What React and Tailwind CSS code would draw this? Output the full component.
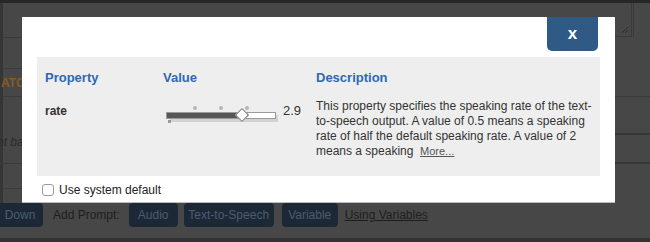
import React from 'react';

const font = { fontFamily: '"Liberation Sans", Arial, sans-serif' };

const Slider = () => (
  <div className="relative w-[112px] h-[20px]">
    {/* tick dots */}
    <div className="absolute left-[27px] top-[1px] w-[4px] h-[4px] rounded-full bg-[#b5b5b5]" />
    <div className="absolute left-[53px] top-[1px] w-[4px] h-[4px] rounded-full bg-[#b5b5b5]" />
    <div className="absolute left-[79px] top-[1px] w-[4px] h-[4px] rounded-full bg-[#b5b5b5]" />
    {/* shadow */}
    <div className="absolute left-[4px] top-[10px] w-[108px] h-[7px] bg-[#d2d2d2]" />
    {/* track */}
    <div className="absolute left-0 top-[7px] w-[110px] h-[7px] border border-[#9a9a9a] bg-white">
      <div className="h-full w-[76px] bg-[#565656]" />
    </div>
    <div className="absolute left-[2px] top-[15px] w-[3px] h-[3px] bg-[#9a9a9a]" />
    {/* thumb */}
    <div className="absolute left-[71px] top-[5px] w-[10px] h-[10px] rotate-45 bg-white border border-[#777]" />
  </div>
);

const ToolButton = ({ children, className = '' }) => (
  <div className={`h-[24px] rounded-[4px] bg-[#1c2836] text-[#4c5c70] flex items-center justify-center ${className}`}>{children}</div>
);

export default function App() {
  return (
    <div className="relative w-[650px] h-[242px] overflow-hidden bg-[#474747] flex flex-col" style={font}>
      {/* background page, dimmed */}
      <div className="h-[3px] bg-[#272727]" />
      <div className="h-[200px] flex">
        <div className="w-[23px] border-l-[3px] border-[#363636] flex flex-col">
          <div className="h-[35px] border-b border-[#3a3a3a]" />
          <div className="h-[31px] border-b border-[#3a3a3a]" />
          <div className="h-[28px] border-b border-[#3a3a3a] text-[12px] font-bold text-[#8a5a20] leading-[28px] -ml-[2px]">ATC</div>
          <div className="h-[67px] border-b border-[#3a3a3a] text-[12px] italic text-[#2a2a2a] pt-[36px] -ml-[6px] whitespace-nowrap">nt ba</div>
          <div className="h-[25px] border-b border-[#3a3a3a]" />
        </div>
        <div className="flex-1" />
        <div className="w-[35px] flex flex-col">
          <div className="h-[34px] flex">
            <div className="w-[17px] border-r border-b border-[#3a3a3a] flex items-end justify-end pr-[2px] pb-[2px]">
              <svg width="8" height="8" viewBox="0 0 8 8">
                <path d="M1 7 L7 1 M4 7 L7 4" stroke="#2e2e2e" strokeWidth="1" />
              </svg>
            </div>
            <div className="w-[2px] border-r border-[#3a3a3a]" />
          </div>
          <div className="h-[60px] border-b border-[#3a3a3a]" />
          <div className="h-[38px] border-b-2 border-[#363636]" />
          <div className="h-[29px] border-b-2 border-[#363636]" />
        </div>
      </div>

      {/* bottom toolbar */}
      <div className="h-[35px] flex items-start gap-[6px] text-[12px] -ml-[3px]">
        <ToolButton className="w-[46px]">Down</ToolButton>
        <div className="ml-[4px] mr-[3px] leading-[24px] text-[#1e1e1e]">Add Prompt:</div>
        <ToolButton className="w-[49px]">Audio</ToolButton>
        <ToolButton className="w-[90px]">Text-to-Speech</ToolButton>
        <ToolButton className="ml-[2px] w-[56px]">Variable</ToolButton>
        <div className="ml-[1px] leading-[24px] text-[#1e1e1e] underline">Using Variables</div>
      </div>
      <div className="flex-1 bg-[#333]" />

      {/* modal */}
      <div className="absolute left-[22px] top-[17px] w-[593px] h-[186px] bg-white border-b border-[#bbb]">
        <div className="flex justify-end pr-[17px]">
          <button className="w-[51px] h-[34px] rounded-b-[5px] bg-[#2f5a85] text-white text-[17px] font-bold leading-none pb-[2px]">x</button>
        </div>
        <div className="mx-[15px] mt-[6px] h-[119px] bg-[#eeeeee] pl-[8px] pt-[11px]">
          <div className="flex text-[13px] font-bold text-[#2e68b2]">
            <div className="w-[118px]">Property</div>
            <div className="w-[153px]">Value</div>
            <div>Description</div>
          </div>
          <div className="flex mt-[11px]">
            <div className="w-[121px] text-[12px] font-bold text-[#333] pt-[3px]">rate</div>
            <div className="w-[150px] flex items-start">
              <div className="mt-[6px]"><Slider /></div>
              <div className="ml-[5px] text-[13px] text-[#333] pt-[2px]">2.9</div>
            </div>
            <div className="w-[278px] text-[12px] leading-[15.3px] text-[#333]">
              This property specifies the speaking rate of the text-to-speech output. A value of 0.5 means a speaking rate of half the default speaking rate. A value of 2 means a speaking&nbsp;&nbsp;<span className="underline text-[11px] text-[#555]">More...</span>
            </div>
          </div>
        </div>
        <label className="flex items-center ml-[20px] mt-[5px] text-[12px] text-[#222]">
          <span className="w-[12px] h-[12px] rounded-[3px] border border-[#999] bg-white" />
          <span className="ml-[5px]">Use system default</span>
        </label>
      </div>
    </div>
  );
}
